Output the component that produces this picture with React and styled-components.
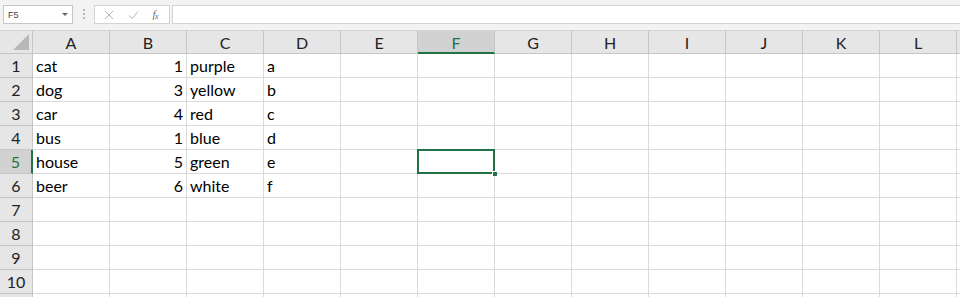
import React from "react";
import styled, { createGlobalStyle } from "styled-components";

const GlobalStyle = createGlobalStyle`
  html, body {
    margin: 0;
    padding: 0;
    background: #ffffff;
    overflow: hidden;
  }
  body {
    font-family: Lato, "Open Sans", "Liberation Sans", sans-serif;
  }
`;

const GREEN = "#217346";
const COLS = ["A", "B", "C", "D", "E", "F", "G", "H", "I", "J", "K", "L"];
const DATA = [
  ["cat", 1, "purple", "a"],
  ["dog", 3, "yellow", "b"],
  ["car", 4, "red", "c"],
  ["bus", 1, "blue", "d"],
  ["house", 5, "green", "e"],
  ["beer", 6, "white", "f"],
];
// row 11 only peeks in at the bottom edge
const ROW_COUNT = 11;
const LABELLED_ROWS = 10;
const SEL_COL = 5;
const SEL_ROW = 5;

const Page = styled.div`
  width: 960px;
  height: 297px;
  overflow: hidden;
  display: flex;
  flex-direction: column;
`;

const Toolbar = styled.div`
  height: 30px;
  flex: none;
  background: #f3f3f3;
  display: flex;
  align-items: flex-start;
  padding-top: 5px;
  box-sizing: border-box;
`;

const NameBox = styled.div`
  margin-left: 3px;
  width: 70px;
  height: 19px;
  box-sizing: border-box;
  background: #fff;
  border: 1px solid #c6c6c6;
  display: flex;
  align-items: center;
  justify-content: space-between;
  padding: 0 4px 0 4px;
  font-family: "Liberation Sans", Arial, sans-serif;
  font-size: 9px;
  color: #444;
`;

const Caret = styled.span`
  width: 0;
  height: 0;
  border-left: 3px solid transparent;
  border-right: 3px solid transparent;
  border-top: 3px solid #666;
`;

const Grip = styled.div`
  width: 2px;
  height: 12px;
  margin: 3px 9px 0 10px;
  background-image: radial-gradient(circle, #b8b8b8 0.8px, transparent 1px);
  background-size: 2px 4px;
`;

const FxBox = styled.div`
  width: 76px;
  height: 19px;
  box-sizing: border-box;
  background: #fff;
  border: 1px solid #d4d4d4;
  display: flex;
  align-items: center;
  justify-content: space-around;
  padding: 0 4px 0 2px;
`;

const FxLabel = styled.span`
  font-family: "Liberation Serif", "Times New Roman", serif;
  font-style: italic;
  font-size: 11px;
  color: #6e6e6e;
  letter-spacing: -0.5px;

  & > sub {
    font-size: 8px;
    vertical-align: -1px;
  }
`;

const FormulaInput = styled.div`
  flex: 1;
  height: 19px;
  margin-left: 2px;
  box-sizing: border-box;
  background: #fff;
  border: 1px solid #d4d4d4;
  border-right: none;
`;

const Grid = styled.div`
  display: grid;
  grid-template-columns: 33px repeat(12, 77px) 1fr;
  grid-auto-rows: 24px;
  flex: none;
`;

const Corner = styled.div`
  box-sizing: border-box;
  background: #e6e6e6;
  border-top: 1px solid #d4d4d4;
  border-right: 1px solid #c6c6c6;
  border-bottom: 1px solid #c6c6c6;
  position: relative;

  &::after {
    content: "";
    position: absolute;
    right: 3px;
    bottom: 3px;
    width: 0;
    height: 0;
    border-left: 16px solid transparent;
    border-bottom: 16px solid #b8b8b8;
  }
`;

const ColHeader = styled.div`
  box-sizing: border-box;
  background: ${(p) => (p.$active ? "#d2d2d2" : "#e6e6e6")};
  color: ${(p) => (p.$active ? GREEN : "#222")};
  border-top: 1px solid #d4d4d4;
  border-right: 1px solid #c6c6c6;
  border-bottom: ${(p) => (p.$active ? `2px solid ${GREEN}` : "1px solid #c6c6c6")};
  display: flex;
  align-items: center;
  justify-content: center;
  padding-top: ${(p) => (p.$active ? "1px" : "0")};
  font-size: 16px;
`;

const RowHeader = styled.div`
  box-sizing: border-box;
  background: ${(p) => (p.$active ? "#d2d2d2" : "#e6e6e6")};
  color: ${(p) => (p.$active ? GREEN : "#222")};
  border-bottom: 1px solid #c6c6c6;
  border-right: ${(p) => (p.$active ? `2px solid ${GREEN}` : "1px solid #c6c6c6")};
  display: flex;
  align-items: center;
  justify-content: center;
  font-size: 16px;
`;

const Cell = styled.div`
  box-sizing: border-box;
  border-right: 1px solid #dadada;
  border-bottom: 1px solid #dadada;
  display: flex;
  align-items: center;
  justify-content: ${(p) => (p.$num ? "flex-end" : "flex-start")};
  padding: 0 3px;
  font-size: 16px;
  color: #000;
  white-space: nowrap;
  position: relative;

  ${(p) =>
    p.$selected &&
    `
    &::before {
      content: "";
      position: absolute;
      left: -1px;
      top: -1px;
      right: -1px;
      bottom: -1px;
      border: 2px solid ${GREEN};
      pointer-events: none;
    }
    &::after {
      content: "";
      position: absolute;
      right: -3px;
      bottom: -3px;
      width: 5px;
      height: 5px;
      background: ${GREEN};
      border: 1px solid #fff;
      border-right: none;
      border-bottom: none;
      box-sizing: border-box;
      z-index: 2;
    }
  `}
`;

const Filler = styled.div`
  box-sizing: border-box;
  background: ${(p) => (p.$head ? "#e6e6e6" : "#fff")};
  border-top: ${(p) => (p.$head ? "1px solid #d4d4d4" : "none")};
  border-bottom: 1px solid ${(p) => (p.$head ? "#c6c6c6" : "#dadada")};
`;

const CrossIcon = () => (
  <svg width="10" height="10" viewBox="0 0 10 10">
    <path d="M1 1 L9 9 M9 1 L1 9" stroke="#b4b4b4" strokeWidth="1" fill="none" />
  </svg>
);

const CheckIcon = () => (
  <svg width="11" height="10" viewBox="0 0 11 10">
    <path d="M1 5.5 L4 8.5 L10 1.5" stroke="#b4b4b4" strokeWidth="1" fill="none" />
  </svg>
);

export default function App() {
  const rows = [];
  for (let r = 1; r <= ROW_COUNT; r++) {
    const data = DATA[r - 1] || [];
    rows.push(
      <React.Fragment key={r}>
        <RowHeader $active={r === SEL_ROW}>{r <= LABELLED_ROWS ? r : ""}</RowHeader>
        {COLS.map((c, i) => {
          const v = data[i];
          return (
            <Cell
              key={c}
              $num={typeof v === "number"}
              $selected={r === SEL_ROW && i === SEL_COL}
            >
              {v}
            </Cell>
          );
        })}
        <Filler />
      </React.Fragment>
    );
  }

  return (
    <>
      <GlobalStyle />
      <Page>
        <Toolbar>
          <NameBox>
            F5
            <Caret />
          </NameBox>
          <Grip />
          <FxBox>
            <CrossIcon />
            <CheckIcon />
            <FxLabel>
              f<sub>x</sub>
            </FxLabel>
          </FxBox>
          <FormulaInput />
        </Toolbar>
        <Grid>
          <Corner />
          {COLS.map((c, i) => (
            <ColHeader key={c} $active={i === SEL_COL}>
              {c}
            </ColHeader>
          ))}
          <Filler $head />
          {rows}
        </Grid>
      </Page>
    </>
  );
}
